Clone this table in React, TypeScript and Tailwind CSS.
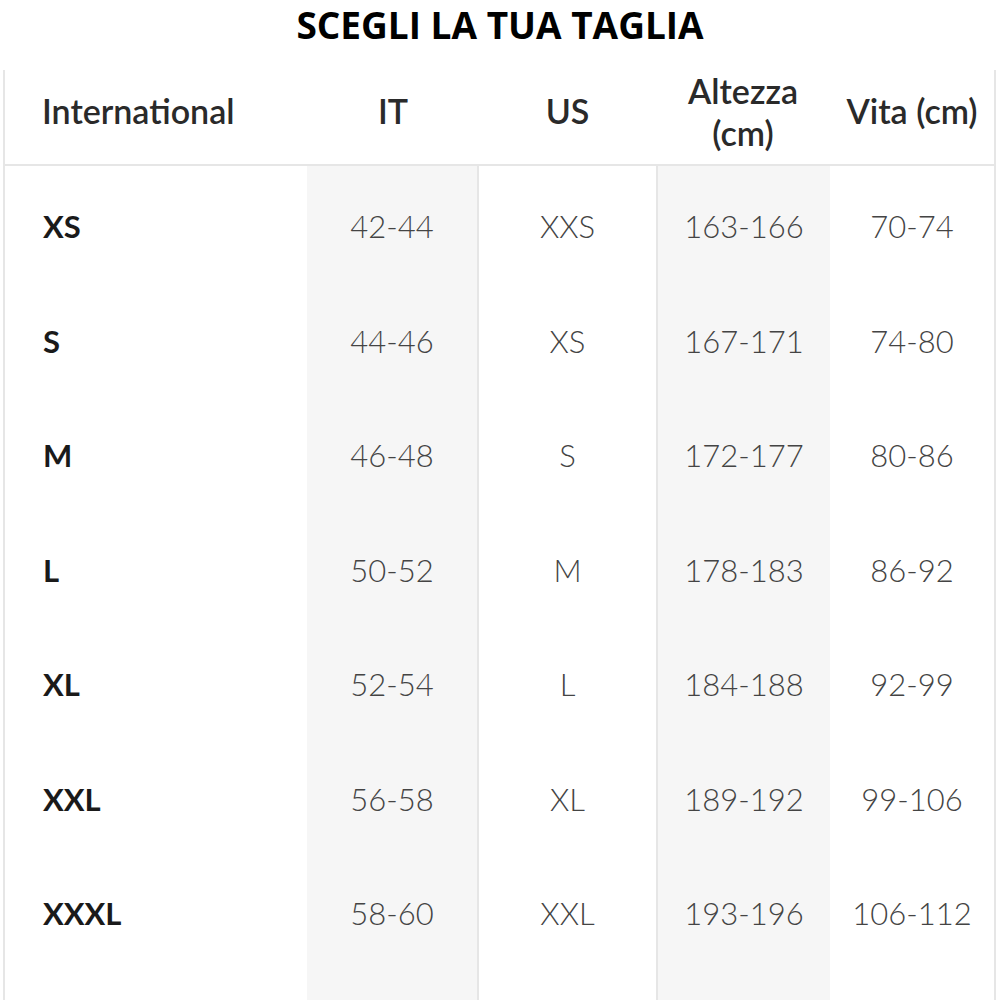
const rows = [
  ["XS", "42-44", "XXS", "163-166", "70-74"],
  ["S", "44-46", "XS", "167-171", "74-80"],
  ["M", "46-48", "S", "172-177", "80-86"],
  ["L", "50-52", "M", "178-183", "86-92"],
  ["XL", "52-54", "L", "184-188", "92-99"],
  ["XXL", "56-58", "XL", "189-192", "99-106"],
  ["XXXL", "58-60", "XXL", "193-196", "106-112"],
];

const cols = "grid grid-cols-[302px_172px_177px_174px_1fr]";

export default function App() {
  return (
    <div className="w-[1000px] h-[1000px] overflow-hidden bg-white flex flex-col">
      <h1
        className="h-[70px] shrink-0 text-center text-[37px] font-bold text-black leading-[50px]"
        style={{ fontFamily: '"Open Sans", sans-serif' }}
      >
        SCEGLI LA TUA TAGLIA
      </h1>

      <div
        className="ml-[3px] w-[993px] flex-1 flex flex-col border-l-2 border-r-2 border-[#e6e6e6]"
        style={{ fontFamily: 'Lato, "Noto Sans", sans-serif' }}
      >
        {/* header */}
        <div className={`${cols} h-[96px] shrink-0 border-b-2 border-[#e6e6e6] text-[34px] font-semibold text-[#2a2a2a] items-center`}>
          <div className="pl-[37px] pb-[20px]">International</div>
          <div className="text-center pb-[20px]">IT</div>
          <div className="text-center pb-[20px]">US</div>
          <div className="text-center leading-[42px] pb-[16px]">
            Altezza
            <br />
            (cm)
          </div>
          <div className="text-center pb-[20px]">Vita (cm)</div>
        </div>

        {/* body */}
        <div className={`${cols} flex-1 auto-rows-[114.5px]`}>
          {rows.map((r) => (
            <Row key={r[0]} r={r} />
          ))}
          <div className="h-full" />
          <div className="h-full bg-[#f6f6f6] border-r-2 border-[#e6e6e6]" />
          <div className="h-full" />
          <div className="h-full bg-[#f6f6f6] border-l-2 border-[#e6e6e6]" />
          <div className="h-full" />
        </div>
      </div>
    </div>
  );
}

function Row({ r }: { r: string[] }) {
  const val = "flex items-center justify-center text-[31px] font-light text-[#444] pt-[6px]";
  return (
    <>
      <div className="flex items-center pl-[38px] pt-[6px] text-[31px] font-bold text-[#1a1a1a]">{r[0]}</div>
      <div className={`${val} bg-[#f6f6f6] border-r-2 border-[#e6e6e6]`}>{r[1]}</div>
      <div className={val}>{r[2]}</div>
      <div className={`${val} bg-[#f6f6f6] border-l-2 border-[#e6e6e6]`}>{r[3]}</div>
      <div className={val}>{r[4]}</div>
    </>
  );
}
